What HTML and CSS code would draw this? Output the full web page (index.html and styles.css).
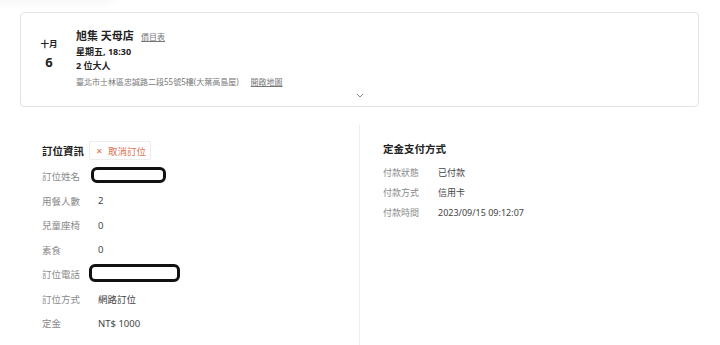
FILE: index.html
```html
<!DOCTYPE html>
<html lang="zh-Hant">
<head>
    <meta charset="UTF-8">
    <meta name="viewport" content="width=device-width, initial-scale=1.0">
    <title>訂位詳情</title>
    <link rel="stylesheet" href="styles.css">
</head>
<body>
    <div class="top-shadow"></div>

    <div class="booking-card">
        <div class="booking-main">
            <div class="date">
                <div class="month">十月</div>
                <div class="day">6</div>
            </div>
            <div class="info">
                <div class="shop">
                    <span class="shop-name">旭集 天母店</span>
                    <a class="link small" href="#">價目表</a>
                </div>
                <div class="when">星期五, 18:30</div>
                <div class="guests">2 位大人</div>
                <div class="address">
                    臺北市士林區忠誠路二段55號5樓(大葉高島屋)
                    <a class="link" href="#">開啟地圖</a>
                </div>
            </div>
        </div>
        <div class="toggle">
            <svg width="8" height="5" viewBox="0 0 8 5"><path d="M1 1 L4 4 L7 1" fill="none" stroke="#8a8a8a" stroke-width="1"/></svg>
        </div>
    </div>

    <div class="details">
        <div class="col col-left">
            <div class="col-head">
                <h2>訂位資訊</h2>
                <button class="cancel-btn"><span class="x">✕</span>取消訂位</button>
            </div>
            <div class="rows">
                <div class="row"><span class="label">訂位姓名</span><span class="value"><span class="redact redact-name"></span></span></div>
                <div class="row"><span class="label">用餐人數</span><span class="value">2</span></div>
                <div class="row"><span class="label">兒童座椅</span><span class="value">0</span></div>
                <div class="row"><span class="label">素食</span><span class="value">0</span></div>
                <div class="row"><span class="label">訂位電話</span><span class="value"><span class="redact redact-phone"></span></span></div>
                <div class="row"><span class="label">訂位方式</span><span class="value">網路訂位</span></div>
                <div class="row"><span class="label">定金</span><span class="value">NT$ 1000</span></div>
            </div>
        </div>
        <div class="col col-right">
            <div class="col-head">
                <h2>定金支付方式</h2>
            </div>
            <div class="rows">
                <div class="row pay-row"><span class="label">付款狀態</span><span class="value">已付款</span></div>
                <div class="row pay-row"><span class="label">付款方式</span><span class="value">信用卡</span></div>
                <div class="row pay-row"><span class="label">付款時間</span><span class="value">2023/09/15 09:12:07</span></div>
            </div>
        </div>
    </div>
</body>
</html>
```

FILE: styles.css
```css
body {
    margin: 0;
    background: #fff;
    color: #333;
    font-family: "Noto Sans", "Noto Sans CJK TC", sans-serif;
}
.top-shadow {
    width: 110px;
    height: 0;
    box-shadow: 0 0 8px 3px rgba(0, 0, 0, 0.05);
}
.booking-card {
    margin: 12px 21px 0 20px;
    height: 95px;
    box-sizing: border-box;
    border: 1px solid #e3e3e3;
    border-radius: 4px;
    padding-top: 13px;
}
.booking-main {
    display: flex;
    padding-left: 18px;
}
.date {
    width: 20px;
    margin-top: 12px;
    margin-right: 17px;
    text-align: center;
    font-weight: bold;
    color: #222;
}
.month {
    font-size: 8.5px;
    line-height: 12px;
}
.day {
    font-size: 13px;
    line-height: 16px;
    margin-top: 4px;
}
.info {
    color: #222;
}
.shop {
    line-height: 16px;
}
.shop-name {
    font-size: 11px;
    font-weight: bold;
    margin-right: 3px;
}
.link {
    color: #777;
    text-decoration: underline;
    font-size: 8px;
    margin-left: 10px;
}
.link.small {
    margin-left: 0;
}
.when, .guests {
    font-size: 9px;
    font-weight: bold;
    line-height: 14px;
}
.address {
    font-size: 8px;
    line-height: 14px;
    margin-top: 2px;
    color: #777;
}
.toggle {
    display: flex;
    justify-content: center;
    height: 8px;
    align-items: center;
    margin-top: 2px;
}
.details {
    display: flex;
    margin-top: 18px;
}
.col {
    width: 360px;
    min-height: 220px;
}
.col-left {
    padding: 16px 0 0 42px;
    border-right: 1px solid #eeeeee;
    box-sizing: border-box;
}
.col-right {
    padding: 14px 0 0 23px;
    box-sizing: border-box;
}
.col-head {
    display: flex;
    align-items: center;
    height: 19px;
}
h2 {
    margin: 0;
    font-size: 10.5px;
    font-weight: bold;
    color: #222;
}
.cancel-btn {
    margin-left: 5px;
    height: 19px;
    padding: 0 4px 0 6px;
    border: 1px solid #ececec;
    border-radius: 2px;
    background: #fff;
    color: #d9704e;
    font-family: inherit;
    font-size: 9.5px;
    display: flex;
    align-items: center;
}
.cancel-btn .x {
    font-size: 8px;
    margin-right: 5px;
}
.rows {
    margin-top: 4px;
}
.row {
    display: flex;
    align-items: center;
    height: 24.5px;
    font-size: 9.5px;
}
.pay-row {
    height: 20px;
    font-size: 9px;
}
.label {
    width: 56px;
    color: #8a8a8a;
}
.pay-row .label {
    width: 55px;
}
.value {
    color: #444;
}
.redact {
    display: inline-block;
    box-sizing: border-box;
    border: 3px solid #111;
    border-radius: 6px;
}
.redact-name {
    width: 75px;
    height: 16px;
    margin-left: -7px;
}
.redact-phone {
    width: 91px;
    height: 18px;
    margin-left: -9px;
}
```
